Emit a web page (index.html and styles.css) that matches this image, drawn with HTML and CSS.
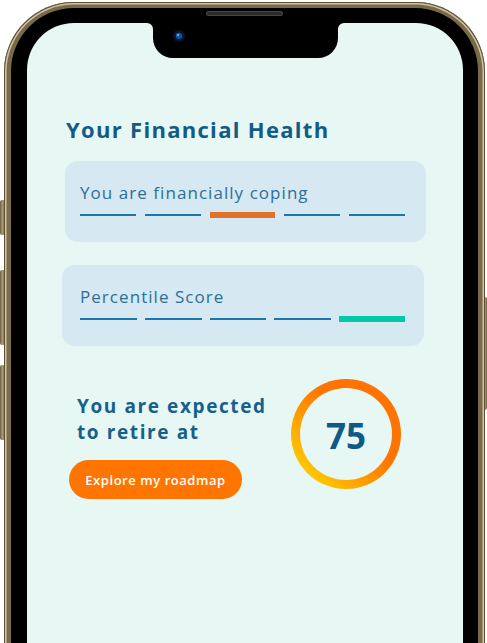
FILE: index.html
```html
<!DOCTYPE html>
<html lang="en">
<head>
<meta charset="utf-8">
<title>Your Financial Health</title>
<link rel="stylesheet" href="styles.css">
</head>
<body>
<div class="stage">
  <span class="btn-side btn-l1"></span>
  <span class="btn-side btn-l2"></span>
  <span class="btn-side btn-l3"></span>
  <span class="btn-side btn-r1"></span>
  <div class="phone">
    <div class="bezel">
      <span class="speaker"></span>
      <div class="screen">
        <svg class="notch" width="197" height="40" viewBox="0 0 197 40">
          <path d="M0 0H197V3A6 6 0 0 0 191 9V18A20 20 0 0 1 171 38H26A20 20 0 0 1 6 18V9A6 6 0 0 0 0 3Z" fill="#000"/>
          <circle cx="32" cy="16" r="6" fill="#0b1424"/>
          <circle cx="32" cy="16" r="3.2" fill="#0d4fa8"/>
          <circle cx="31" cy="15" r="1.2" fill="#5fa8ff"/>
        </svg>
        <h1 class="title">Your Financial Health</h1>
        <div class="card card-1">
          <p class="card-label">You are financially coping</p>
          <div class="bars">
            <span class="seg"></span>
            <span class="seg"></span>
            <span class="seg seg-wide seg-orange"></span>
            <span class="seg"></span>
            <span class="seg"></span>
          </div>
        </div>
        <div class="card card-2">
          <p class="card-label">Percentile Score</p>
          <div class="bars bars-2">
            <span class="seg"></span>
            <span class="seg"></span>
            <span class="seg"></span>
            <span class="seg"></span>
            <span class="seg seg-wide seg-teal"></span>
          </div>
        </div>
        <div class="retire">
          <div class="retire-left">
            <p class="retire-text">You are expected<br>to retire at</p>
            <button class="cta">Explore my roadmap</button>
          </div>
          <div class="ring">
            <div class="ring-inner">75</div>
          </div>
        </div>
      </div>
    </div>
  </div>
</div>
</body>
</html>
```

FILE: styles.css
```css
* { box-sizing: border-box; }
html, body { margin: 0; padding: 0; background: #fff; overflow: hidden; }
body { width: 487px; height: 643px; }

.stage {
  position: relative;
  width: 487px;
  height: 643px;
  padding: 2px 2px 0 4px;
}

.btn-side {
  position: absolute;
  background: linear-gradient(90deg, #6e5f40, #a89a78 50%, #6e5f40);
  border-radius: 2px;
}
.btn-l1 { left: 0; top: 200px; width: 5px; height: 35px; }
.btn-l2 { left: 0; top: 270px; width: 5px; height: 75px; }
.btn-l3 { left: 0; top: 365px; width: 5px; height: 75px; }
.btn-r1 { right: 0; top: 297px; width: 4px; height: 113px; }

.phone {
  position: relative;
  width: 481px;
  height: 720px;
  border-radius: 70px;
  background: #7a6a48;
  padding: 6px 7px 0 7px;
  box-shadow: inset 0 0 0 1px #5c4f34, inset 0 0 0 2.5px #cfc5ab, inset 0 0 0 3.5px #7a6a48;
}

.bezel {
  position: relative;
  height: 100%;
  background: #000;
  border-radius: 63px;
  padding: 15px 15px 0 16px;
}

.speaker {
  position: absolute;
  left: 196px;
  top: 4px;
  width: 75px;
  height: 3px;
  border-radius: 2px;
  background: #2b2b2b;
  box-shadow: 0 0 0 1px #444;
}

.screen {
  position: relative;
  height: 100%;
  background: #e6f7f4;
  border-radius: 47px;
  padding: 91px 0 0 0;
  font-family: "Open Sans", "Noto Sans", sans-serif;
}

.notch {
  position: absolute;
  left: 120px;
  top: -3px;
}

.title {
  margin: 0 0 0 39px;
  font-family: "Open Sans", sans-serif;
  font-weight: 700;
  font-size: 22px;
  line-height: 30px;
  color: #135b87;
  letter-spacing: 1.3px;
}

.card {
  background: #d6e8f1;
  border-radius: 13px;
  padding: 21px 21px 0 15px;
  height: 81px;
}
.card-1 { margin: 17px 0 0 38px; width: 361px; }
.card-2 { margin: 23px 0 0 35px; width: 362px; padding-left: 18px; padding-right: 19px; }

.card-label {
  margin: 0;
  font-size: 17px;
  line-height: 22px;
  font-weight: 400;
  color: #2e6f98;
  letter-spacing: 1.05px;
}

.bars {
  display: flex;
  align-items: center;
  gap: 9px;
  height: 8px;
  margin-top: 7px;
}
.bars-2 { gap: 8px; }
.seg {
  flex: 55 1 0;
  height: 2.5px;
  background: #1a77ae;
}
.seg-wide { flex-basis: 0; flex-grow: 64; height: 6px; }
.seg-orange { background: #e0732b; }
.seg-teal { background: #00c9a7; }

.retire {
  display: flex;
  align-items: flex-start;
  margin: 33px 0 0 42px;
}

.retire-left {
  width: 222px;
  padding-top: 14px;
}

.retire-text {
  margin: 0 0 0 8px;
  font-weight: 700;
  font-size: 19px;
  line-height: 26px;
  color: #16608b;
  letter-spacing: 1.6px;
}

.cta {
  margin-top: 15px;
  width: 173px;
  height: 39px;
  border: none;
  border-radius: 20px;
  background: #ff7500;
  color: #fff;
  font-family: "Open Sans", sans-serif;
  font-weight: 600;
  font-size: 13px;
  letter-spacing: 0.55px;
  padding: 0;
}

.ring {
  width: 110px;
  height: 110px;
  border-radius: 50%;
  padding: 9px;
  background: linear-gradient(225deg, #ff7400 42%, #ffd400 92%);
}
.ring-inner {
  width: 100%;
  height: 100%;
  border-radius: 50%;
  background: #e6f7f4;
  display: flex;
  align-items: center;
  justify-content: center;
  font-weight: 700;
  font-size: 35px;
  color: #0f5b86;
  padding-top: 2px;
}
```
